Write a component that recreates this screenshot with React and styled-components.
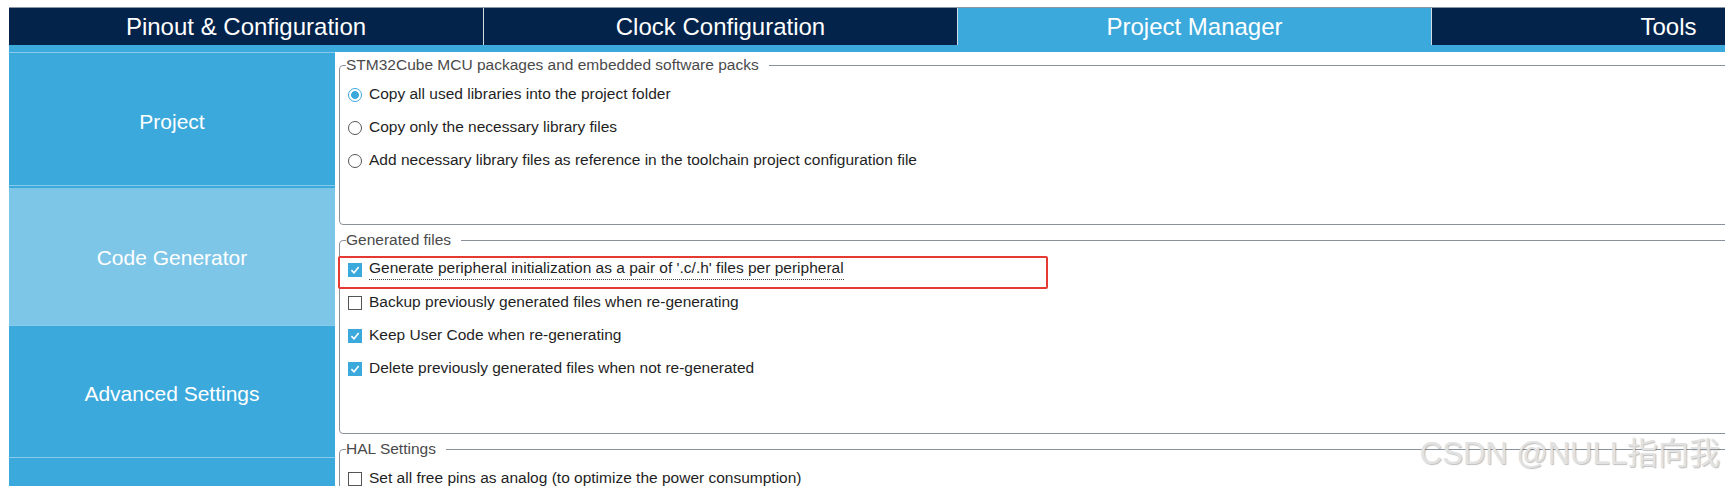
import React from 'react';
import styled, { createGlobalStyle } from 'styled-components';

const GlobalStyle = createGlobalStyle`
  html, body {
    margin: 0;
    padding: 0;
    background: #fff;
    overflow: hidden;
  }
  body {
    font-family: "Liberation Sans", Arial, sans-serif;
  }
`;

const Window = styled.div`
  position: relative;
  width: 1725px;
  height: 486px;
  padding: 7px 0 0 9px;
  box-sizing: border-box;
  overflow: hidden;
`;

const TabBar = styled.div`
  display: flex;
  width: max-content;
  border-top: 1px solid #8996a4;
  border-bottom: 7px solid #3ba9dc;
`;

const Tab = styled.div`
  flex: none;
  width: 474px;
  height: 37px;
  box-sizing: border-box;
  display: flex;
  align-items: center;
  justify-content: center;
  background: ${(p) => (p.$active ? '#3ba9dc' : '#03234b')};
  color: #fff;
  font-size: 24px;
  & + & {
    border-left: 1px solid #d3dbe4;
  }
`;

const Body = styled.div`
  display: flex;
  align-items: flex-start;
`;

const Nav = styled.div`
  flex: none;
  width: 326px;
  display: flex;
  flex-direction: column;
`;

const NavItem = styled.div`
  height: ${(p) => p.$h}px;
  box-sizing: border-box;
  padding-top: 5px;
  border-top: 1px solid #86cbeb;
  background: ${(p) => (p.$active ? '#7ec6e8' : '#3ba9dc')};
  box-shadow: ${(p) => (p.$active ? 'inset 0 2px 0 #3ba9dc' : 'none')};
  color: #fff;
  font-size: 21px;
  display: flex;
  align-items: center;
  justify-content: center;
`;

const Content = styled.div`
  flex: none;
  padding: 4px 0 0 4px;
  display: flex;
  flex-direction: column;
  gap: 6px;
`;

const Group = styled.fieldset`
  margin: 0;
  width: 1420px;
  height: ${(p) => p.$h}px;
  box-sizing: border-box;
  border: 1px solid #8a939d;
  border-radius: 4px;
  padding: 4px 0 0 8px;
`;

const Legend = styled.legend`
  margin-left: -2px;
  padding: 0 10px 0 0;
  font-size: 15.5px;
  line-height: 18px;
  color: #4a4a4a;
`;

const Row = styled.div`
  position: relative;
  height: 33px;
  display: flex;
  align-items: center;
  gap: 7px;
  font-size: 15.5px;
  color: #1f1f1f;
`;

const Radio = styled.span`
  flex: none;
  width: 14px;
  height: 14px;
  box-sizing: border-box;
  border-radius: 50%;
  border: 1px solid ${(p) => (p.$on ? '#3ba9dc' : '#555')};
  background: ${(p) =>
    p.$on ? 'radial-gradient(circle, #3ba9dc 0 3.6px, #fff 4.2px)' : '#fff'};
`;

const Check = styled.span`
  flex: none;
  width: 14px;
  height: 14px;
  box-sizing: border-box;
  display: grid;
  place-items: center;
  border: 1px solid ${(p) => (p.$on ? '#3ba9dc' : '#555')};
  background: ${(p) => (p.$on ? '#3ba9dc' : '#fff')};
`;

const Label = styled.span`
  line-height: 18px;
  padding-bottom: ${(p) => (p.$focus ? '2px' : '0')};
  border-bottom: 1px dotted ${(p) => (p.$focus ? '#444' : 'transparent')};
`;

const Mark = styled.div`
  position: absolute;
  left: -10px;
  top: 3px;
  width: 710px;
  height: 33px;
  box-sizing: border-box;
  border: 2px solid #e53a33;
  border-radius: 2px;
  pointer-events: none;
`;

const Watermark = styled.div`
  position: absolute;
  right: 5px;
  top: 436px;
  font-family: "Liberation Sans", "Noto Sans CJK SC", sans-serif;
  font-size: 31px;
  line-height: 36px;
  color: #e2e2e2;
  text-shadow: 1px 1px 1px rgba(0, 0, 0, 0.25);
  white-space: nowrap;
`;

const tabs = ['Pinout & Configuration', 'Clock Configuration', 'Project Manager', 'Tools'];

const navItems = [
  { label: 'Project', h: 133 },
  { label: 'Code Generator', h: 140, active: true },
  { label: 'Advanced Settings', h: 132 },
  { label: '', h: 60 },
];

const packOptions = [
  { label: 'Copy all used libraries into the project folder', on: true },
  { label: 'Copy only the necessary library files' },
  { label: 'Add necessary library files as reference in the toolchain project configuration file' },
];

const genOptions = [
  { label: "Generate peripheral initialization as a pair of '.c/.h' files per peripheral", on: true, focus: true },
  { label: 'Backup previously generated files when re-generating' },
  { label: 'Keep User Code when re-generating', on: true },
  { label: 'Delete previously generated files when not re-generated', on: true },
];

function Tick() {
  return (
    <svg width="10" height="10" viewBox="0 0 10 10">
      <path d="M1.4 5.1 L4 7.7 L8.7 2.1" stroke="#fff" strokeWidth="1.6" fill="none" />
    </svg>
  );
}

function CheckRow({ label, on, focus }) {
  return (
    <Row>
      <Check $on={on}>{on && <Tick />}</Check>
      <Label $focus={focus}>{label}</Label>
      {focus && <Mark />}
    </Row>
  );
}

export default function App() {
  return (
    <Window>
      <GlobalStyle />
      <TabBar>
        {tabs.map((t) => (
          <Tab key={t} $active={t === 'Project Manager'}>
            {t}
          </Tab>
        ))}
      </TabBar>
      <Body>
        <Nav>
          {navItems.map((n, i) => (
            <NavItem key={i} $h={n.h} $active={n.active}>
              {n.label}
            </NavItem>
          ))}
        </Nav>
        <Content>
          <Group $h={169}>
            <Legend>STM32Cube MCU packages and embedded software packs</Legend>
            {packOptions.map((o) => (
              <Row key={o.label}>
                <Radio $on={o.on} />
                <Label>{o.label}</Label>
              </Row>
            ))}
          </Group>
          <Group $h={203}>
            <Legend>Generated files</Legend>
            {genOptions.map((o) => (
              <CheckRow key={o.label} {...o} />
            ))}
          </Group>
          <Group $h={120}>
            <Legend>HAL Settings</Legend>
            <CheckRow label="Set all free pins as analog (to optimize the power consumption)" />
          </Group>
        </Content>
      </Body>
      <Watermark>CSDN @NULL指向我</Watermark>
    </Window>
  );
}
